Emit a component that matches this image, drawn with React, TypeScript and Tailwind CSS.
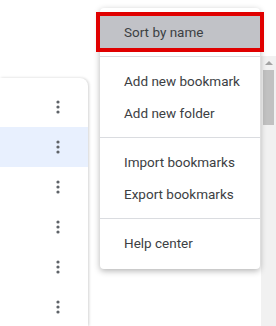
const rows = [0, 1, 2, 3, 4, 5];

const groups = [
  ["Add new bookmark", "Add new folder"],
  ["Import bookmarks", "Export bookmarks"],
  ["Help center"],
];

function Kebab() {
  return (
    <svg width="4" height="14" viewBox="0 0 4 14" className="text-[#5f6368]">
      <circle cx="2" cy="2" r="1.6" fill="currentColor" />
      <circle cx="2" cy="7" r="1.6" fill="currentColor" />
      <circle cx="2" cy="12" r="1.6" fill="currentColor" />
    </svg>
  );
}

export default function App() {
  return (
    <div className="relative flex h-[326px] w-[276px] overflow-hidden bg-white font-['Roboto',sans-serif]">
      {/* list card */}
      <div className="mt-[78px] w-[88px] rounded-tr-lg bg-white pt-[9px] shadow-[1px_0_3px_rgba(0,0,0,0.18)]">
        {rows.map((i) => (
          <div
            key={i}
            className={`flex h-[40px] items-center justify-end pr-[28px] ${
              i === 1 ? "bg-[#e8f0fe]" : ""
            }`}
          >
            <Kebab />
          </div>
        ))}
      </div>

      <div className="flex-1" />

      {/* scrollbar */}
      <div className="mt-[56px] flex w-[15px] flex-col items-center bg-[#f1f1f1]">
        <div className="flex h-[14px] items-center justify-center">
          <div className="h-0 w-0 border-x-[4px] border-b-[4px] border-x-transparent border-b-[#a3a3a3]" />
        </div>
        <div className="h-[55px] w-[11px] bg-[#c1c1c1]" />
      </div>

      {/* menu */}
      <div className="absolute left-[100px] top-[8px] w-[160px] rounded bg-white pt-2 pb-[10px] text-[13.5px] text-[#3c4043] shadow-[0_2px_6px_rgba(0,0,0,0.3)]">
        <div className="flex h-[32px] items-center bg-[#c1c2c7] pl-[24px] outline-4 outline-[#e00000]">
          Sort by name
        </div>
        {groups.map((g, gi) => (
          <div key={gi}>
            <div className="my-2 h-px bg-[#dadce0]" />
            {g.map((label) => (
              <div key={label} className="flex h-[32px] items-center pl-[24px]">
                {label}
              </div>
            ))}
          </div>
        ))}
      </div>
    </div>
  );
}
